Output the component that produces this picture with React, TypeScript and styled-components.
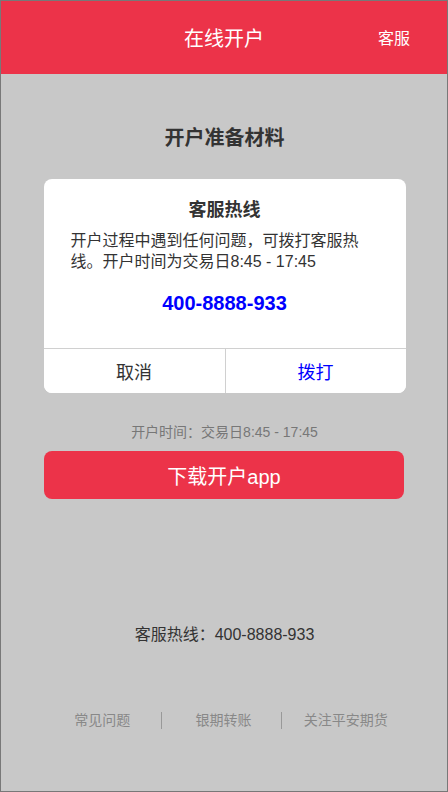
import React from "react";
import styled, { createGlobalStyle } from "styled-components";

const Global = createGlobalStyle`
  html, body { margin: 0; padding: 0; }
  body { font-family: "Liberation Sans", "Noto Sans CJK SC", sans-serif; }
  * { box-sizing: border-box; }
`;

const Page = styled.div`
  width: 448px;
  height: 792px;
  border: 1px solid #787878;
  background: #c8c8c8;
  display: flex;
  flex-direction: column;
  overflow: hidden;
`;

const Header = styled.header`
  height: 73px;
  background: #ec3349;
  display: grid;
  grid-template-columns: 1fr auto 1fr;
  align-items: center;
  color: #fff;
  padding-top: 2px;
`;

const Title = styled.h1`
  grid-column: 2;
  margin: 0;
  font-size: 20px;
  font-weight: normal;
  line-height: 24px;
`;

const HeaderAction = styled.span`
  grid-column: 3;
  justify-self: end;
  margin-right: 37px;
  font-size: 16px;
  line-height: 20px;
`;

const Main = styled.main`
  display: flex;
  flex-direction: column;
  align-items: center;
  padding: 51px 42px 0 43px;
`;

const SectionTitle = styled.h2`
  margin: 0;
  font-size: 20px;
  line-height: 26px;
  font-weight: bold;
  color: #333;
`;

const Dialog = styled.div`
  margin-top: 28px;
  width: 362px;
  background: #fff;
  border-radius: 8px;
  overflow: hidden;
  display: flex;
  flex-direction: column;
`;

const DialogBody = styled.div`
  padding: 20px 38px 0 27px;
  height: 170px;
  border-bottom: 1px solid #d0d0d0;
`;

const DialogTitle = styled.h3`
  margin: 0;
  text-align: center;
  font-size: 18px;
  line-height: 22px;
  font-weight: bold;
  color: #333;
  padding-left: 11px;
`;

const DialogText = styled.p`
  margin: 9px 0 0;
  font-size: 16px;
  line-height: 21px;
  color: #333;
`;

const Phone = styled.div`
  margin-top: 19px;
  padding-left: 11px;
  text-align: center;
  font-size: 20px;
  font-weight: bold;
  line-height: 24px;
  color: #0000ff;
`;

const DialogActions = styled.div`
  display: grid;
  grid-template-columns: 181px 1fr;
  height: 44px;
`;

const DialogButton = styled.button<{ $primary?: boolean }>`
  border: 0;
  background: #fff;
  font-family: inherit;
  font-size: 18px;
  color: ${(p) => (p.$primary ? "#0000ff" : "#333")};
  border-left: ${(p) => (p.$primary ? "1px solid #d0d0d0" : "0")};
  padding: 0;
  cursor: pointer;
`;

const Hours = styled.div`
  margin-top: 30px;
  font-size: 14px;
  line-height: 18px;
  color: #777;
`;

const Download = styled.button`
  margin-top: 10px;
  width: 360px;
  height: 48px;
  align-self: flex-start;
  border: 0;
  border-radius: 8px;
  background: #ec3349;
  color: #fff;
  font-family: inherit;
  font-size: 20px;
  cursor: pointer;
`;

const Hotline = styled.div`
  margin-top: 126px;
  font-size: 16px;
  line-height: 20px;
  color: #333;
`;

const Footer = styled.nav`
  margin-top: 67px;
  display: flex;
  align-items: center;
  align-self: stretch;
`;

const FooterLink = styled.a<{ $w: number; $sep?: boolean }>`
  width: ${(p) => p.$w}px;
  text-align: center;
  font-size: 14px;
  line-height: 17px;
  color: #888;
  text-decoration: none;
  border-left: ${(p) => (p.$sep ? "1px solid #999" : "0")};
  padding-left: ${(p) => (p.$sep ? "4px" : "0")};
`;

export default function App() {
  return (
    <>
      <Global />
      <Page>
        <Header>
          <Title>在线开户</Title>
          <HeaderAction>客服</HeaderAction>
        </Header>
        <Main>
          <SectionTitle>开户准备材料</SectionTitle>
          <Dialog>
            <DialogBody>
              <DialogTitle>客服热线</DialogTitle>
              <DialogText>
                开户过程中遇到任何问题，可拨打客服热线。开户时间为交易日8:45 - 17:45
              </DialogText>
              <Phone>400-8888-933</Phone>
            </DialogBody>
            <DialogActions>
              <DialogButton>取消</DialogButton>
              <DialogButton $primary>拨打</DialogButton>
            </DialogActions>
          </Dialog>
          <Hours>开户时间：交易日8:45 - 17:45</Hours>
          <Download>下载开户app</Download>
          <Hotline>客服热线：400-8888-933</Hotline>
          <Footer>
            <FooterLink $w={117} href="#">常见问题</FooterLink>
            <FooterLink $w={121} $sep href="#">银期转账</FooterLink>
            <FooterLink $w={124} $sep href="#">关注平安期货</FooterLink>
          </Footer>
        </Main>
      </Page>
    </>
  );
}
